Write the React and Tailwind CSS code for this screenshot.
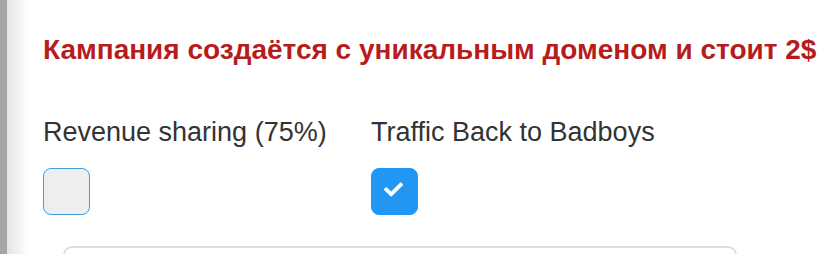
import React, { useState } from 'react';

const CheckBox = ({ checked, onToggle }) => {
  return (
    <button
      type="button"
      onClick={onToggle}
      className={`w-[47px] h-[47px] rounded-[8px] border flex items-center justify-center ${
        checked ? 'bg-[#2196f3] border-[#2196f3]' : 'bg-[#eeeeee] border-[#4a9ad6]'
      }`}
    >
      {checked && (
        <svg width="19" height="19" viewBox="0 0 512 512" fill="white" className="-translate-x-[1px] -translate-y-[2px]">
          <path d="M173.9 439.4l-166.4-166.4c-10-10-10-26.2 0-36.2l36.2-36.2c10-10 26.2-10 36.2 0L192 312.7 432.1 72.6c10-10 26.2-10 36.2 0l36.2 36.2c10 10 10 26.2 0 36.2l-294.4 294.4c-10 10-26.2 10-36.2 0z" />
        </svg>
      )}
    </button>
  );
};

const App = () => {
  const [revenue, setRevenue] = useState(false);
  const [trafficBack, setTrafficBack] = useState(true);

  return (
    <div className="flex h-[254px] w-full overflow-hidden bg-white font-['Liberation_Sans',Arial,sans-serif]">
      {/* sidebar edge */}
      <div className="w-[7px] shrink-0 bg-[#a6a6a6]" />
      <div className="w-[22px] shrink-0 bg-gradient-to-r from-[#e4e4e4] to-white" />

      <div className="flex-1 pl-[14px] pt-[34px]">
        <h2 className="text-[28px] leading-[32px] font-bold text-[#b71c1c] whitespace-nowrap">
          Кампания создаётся с уникальным доменом и стоит 2$
        </h2>

        <div className="grid grid-cols-[328px_328px] mt-[51px]">
          <div>
            <div className="text-[27px] leading-[30px] text-[#333]">Revenue sharing (75%)</div>
            <div className="mt-[21px]">
              <CheckBox checked={revenue} onToggle={() => setRevenue(!revenue)} />
            </div>
          </div>
          <div>
            <div className="text-[27px] leading-[30px] text-[#333]">Traffic Back to Badboys</div>
            <div className="mt-[21px]">
              <CheckBox checked={trafficBack} onToggle={() => setTrafficBack(!trafficBack)} />
            </div>
          </div>
        </div>

        <div className="ml-[20px] mt-[31px] w-[674px] h-[40px] rounded-[9px] border-2 border-[#dddddd]" />
      </div>
    </div>
  );
};

export default App;
